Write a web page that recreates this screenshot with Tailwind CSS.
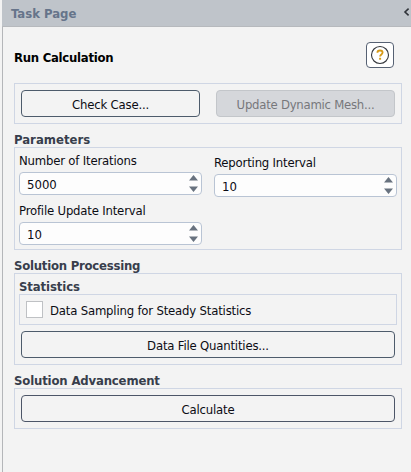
<!DOCTYPE html>
<html lang="en">
<head>
<meta charset="utf-8">
<title>Task Page</title>
<script src="https://cdn.jsdelivr.net/npm/@tailwindcss/browser@4"></script>
</head>
<body class="w-[411px] h-[472px] overflow-hidden bg-[#f3f3f3] pl-[2px] font-['DejaVu_Sans_Condensed','DejaVu_Sans',sans-serif] [font-stretch:condensed] text-[13px] leading-4 tracking-[-0.19px] text-[#0c0c14]">
<div class="flex h-[472px] flex-col">
  <header class="flex h-[27px] shrink-0 items-center justify-between border-b border-[#b6b9bd] bg-[#bfc4ca] pl-[9px] pr-[1px] pt-[2px] font-bold tracking-normal text-[#66748a]">
    <span class="whitespace-nowrap">Task Page</span>
    <svg class="h-[10px] w-[7px] -translate-y-[2px]" viewBox="0 0 7 10" fill="none" stroke="#30343a" stroke-width="1.6"><path d="M5.6 1.6 2 5l3.6 3.4"/></svg>
  </header>
  <main class="flex grow flex-col border-l border-[#b4b6b9] pl-[11px] pr-[9px]">
    <div class="mt-[15px] flex h-[26px] justify-between pr-[8px]">
      <h1 class="mt-[8px] whitespace-nowrap font-bold tracking-[-0.27px] text-black">Run Calculation</h1>
      <button class="flex h-[26px] w-[28px] items-center justify-center rounded-[4px] border border-[#566173] bg-white" aria-label="Help">
        <svg class="h-5 w-5" viewBox="0 0 20 20" fill="none"><circle cx="10" cy="10" r="8.5" stroke="#33363b" stroke-width="1.1"/><path d="M7.4 7.8C7.4 6.2 8.5 5.5 10 5.5s2.6.8 2.6 2.1c0 1.9-2.5 1.8-2.5 4" stroke="#d79a16" stroke-width="1.8"/><path d="M9.1 12.8h2v1.9h-2z" fill="#d79a16"/></svg>
      </button>
    </div>
    <section class="mt-[15px] flex h-[41px] justify-between border border-[#cfd6e4] px-[6px] pt-[6px]">
      <button class="h-[27px] w-[179px] whitespace-nowrap rounded-[4px] border border-[#4d5b6b] pt-[2px]">Check Case...</button>
      <button class="h-[27px] w-[179px] whitespace-nowrap rounded-[4px] border border-[#c3c6ca] bg-[#d5d7db] pt-[2px] tracking-[-0.25px] text-[#77777b]">Update Dynamic Mesh...</button>
    </section>
    <h2 class="mt-[8px] h-[15px] whitespace-nowrap font-bold tracking-normal text-[#383e4c]">Parameters</h2>
    <section class="flex h-[103px] justify-between border border-[#cfd6e4] px-[4px]">
      <div class="w-[183px]">
        <label class="mt-[5px] block h-[19px] whitespace-nowrap">Number of Iterations</label>
        <div class="flex h-[23px] items-center justify-between rounded-[4px] border border-[#b9c4d4] bg-[#fdfdfd] pl-[7px] pr-[3px]"><span class="pt-[2px] tracking-normal">5000</span><svg class="h-[17px] w-[9px]" viewBox="0 0 9 17" fill="#68727f"><path d="M0 5.5 4.5 0 9 5.5zM0 11.5h9L4.5 17z"/></svg></div>
        <label class="mt-[8px] block h-[19px] whitespace-nowrap">Profile Update Interval</label>
        <div class="flex h-[23px] items-center justify-between rounded-[4px] border border-[#b9c4d4] bg-[#fdfdfd] pl-[7px] pr-[3px]"><span class="pt-[2px] tracking-normal">10</span><svg class="h-[17px] w-[9px]" viewBox="0 0 9 17" fill="#68727f"><path d="M0 5.5 4.5 0 9 5.5zM0 11.5h9L4.5 17z"/></svg></div>
      </div>
      <div class="w-[183px]">
        <label class="mt-[7px] block h-[19px] whitespace-nowrap">Reporting Interval</label>
        <div class="flex h-[23px] items-center justify-between rounded-[4px] border border-[#b9c4d4] bg-[#fdfdfd] pl-[7px] pr-[3px]"><span class="pt-[2px] tracking-normal">10</span><svg class="h-[17px] w-[9px]" viewBox="0 0 9 17" fill="#68727f"><path d="M0 5.5 4.5 0 9 5.5zM0 11.5h9L4.5 17z"/></svg></div>
      </div>
    </section>
    <h2 class="mt-[8px] h-[15px] whitespace-nowrap font-bold tracking-[-0.24px] text-[#383e4c]">Solution Processing</h2>
    <section class="h-[92px] border border-[#cfd6e4] px-[4px] pt-[5px]">
      <h3 class="h-[15px] whitespace-nowrap font-bold tracking-[-0.1px] text-[#383e4c]">Statistics</h3>
      <label class="flex h-[31px] items-center border border-[#cfd6e4] pl-[6px]"><span class="h-[17px] w-[17px] border border-[#bfc1c4] bg-white"></span><span class="ml-[7px] whitespace-nowrap pt-[2px]">Data Sampling for Steady Statistics</span></label>
      <button class="mx-[2px] mt-[6px] block h-[27px] w-[374px] rounded-[4px] border border-[#4d5b6b] pt-[2px]">Data File Quantities...</button>
    </section>
    <h2 class="mt-[8px] h-[15px] whitespace-nowrap font-bold tracking-[-0.16px] text-[#383e4c]">Solution Advancement</h2>
    <section class="h-[41px] border border-[#cfd6e4] px-[6px] pt-[6px]">
      <button class="block h-[27px] w-[374px] rounded-[4px] border border-[#4d5668] pt-[2px]">Calculate</button>
    </section>
  </main>
</div>
</body>
</html>
